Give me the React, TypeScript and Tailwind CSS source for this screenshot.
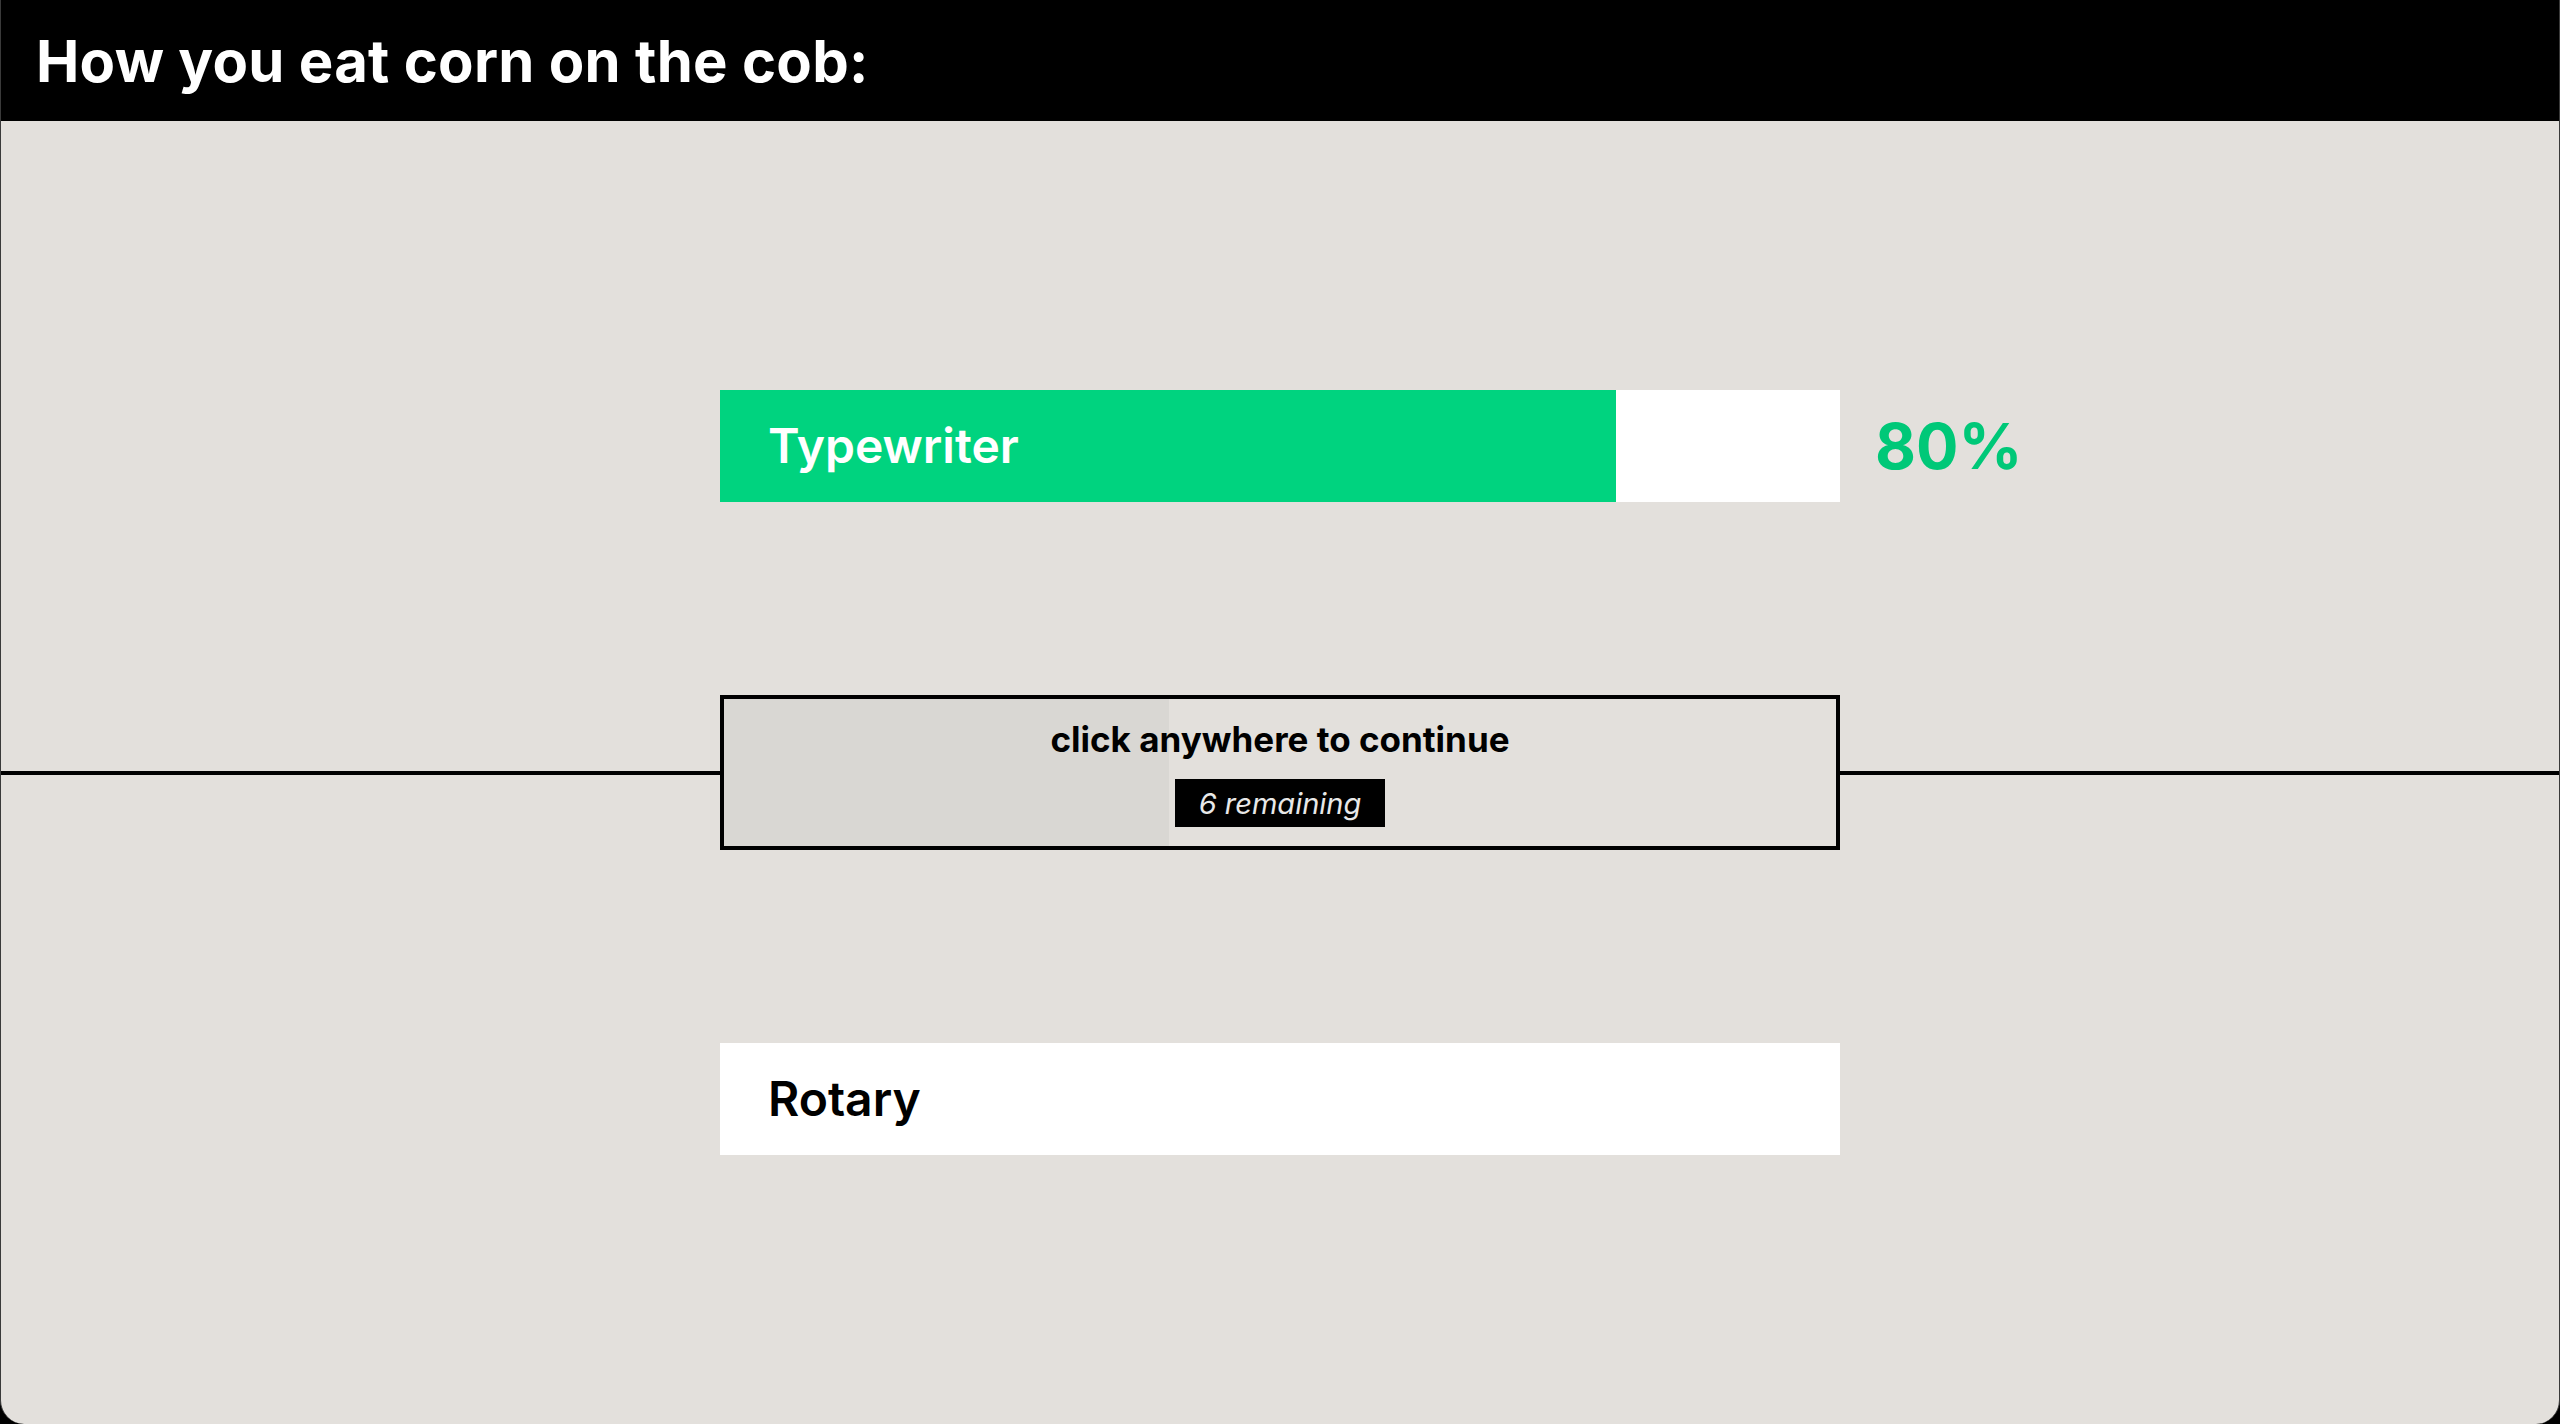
export default function App() {
  const pct = 80;
  return (
    <div className="w-[2560px] h-[1424px] bg-black" style={{ fontFamily: "Inter, 'Noto Sans', sans-serif" }}>
      <div className="flex flex-col w-full h-full rounded-b-[24px] overflow-hidden border-x border-[#3a3a3a] bg-[#e3e0dc]">
        <header className="h-[121px] shrink-0 bg-black flex items-center px-[35px]">
          <h1 className="text-white font-bold text-[58px] tracking-[0.005em] leading-none">How you eat corn on the cob:</h1>
        </header>
        <main className="flex-1 flex flex-col justify-center items-center gap-[193px]">
          <div className="relative w-[1120px] h-[112px] bg-white">
            <div className="h-full bg-[#00d37f] flex items-center pl-[48px]" style={{ width: `${pct}%` }}>
              <span className="text-white font-semibold text-[48px] leading-none">Typewriter</span>
            </div>
            <span className="absolute left-full top-1/2 -translate-y-1/2 ml-[35px] text-[#00c878] font-bold text-[63px] leading-none">
              {pct}%
            </span>
          </div>
          <div className="w-full flex items-center">
            <div className="flex-1 h-[4px] bg-black" />
            <div className="relative w-[1120px] h-[155px] border-[4px] border-black bg-[#e3e0dc] flex flex-col items-center justify-center">
              <div className="absolute left-0 top-0 bottom-0 w-[40%] bg-[#d9d7d3]" />
              <span className="relative text-black font-bold text-[35px] leading-none mt-[4px]">click anywhere to continue</span>
              <span className="relative mt-[22px] bg-black text-[#e8e8e8] italic text-[29px] leading-none w-[210px] h-[48px] flex items-center justify-center">
                6 remaining
              </span>
            </div>
            <div className="flex-1 h-[4px] bg-black" />
          </div>
          <div className="w-[1120px] h-[112px] bg-white flex items-center pl-[48px]">
            <span className="text-black font-semibold text-[48px] leading-none">Rotary</span>
          </div>
        </main>
      </div>
    </div>
  );
}
